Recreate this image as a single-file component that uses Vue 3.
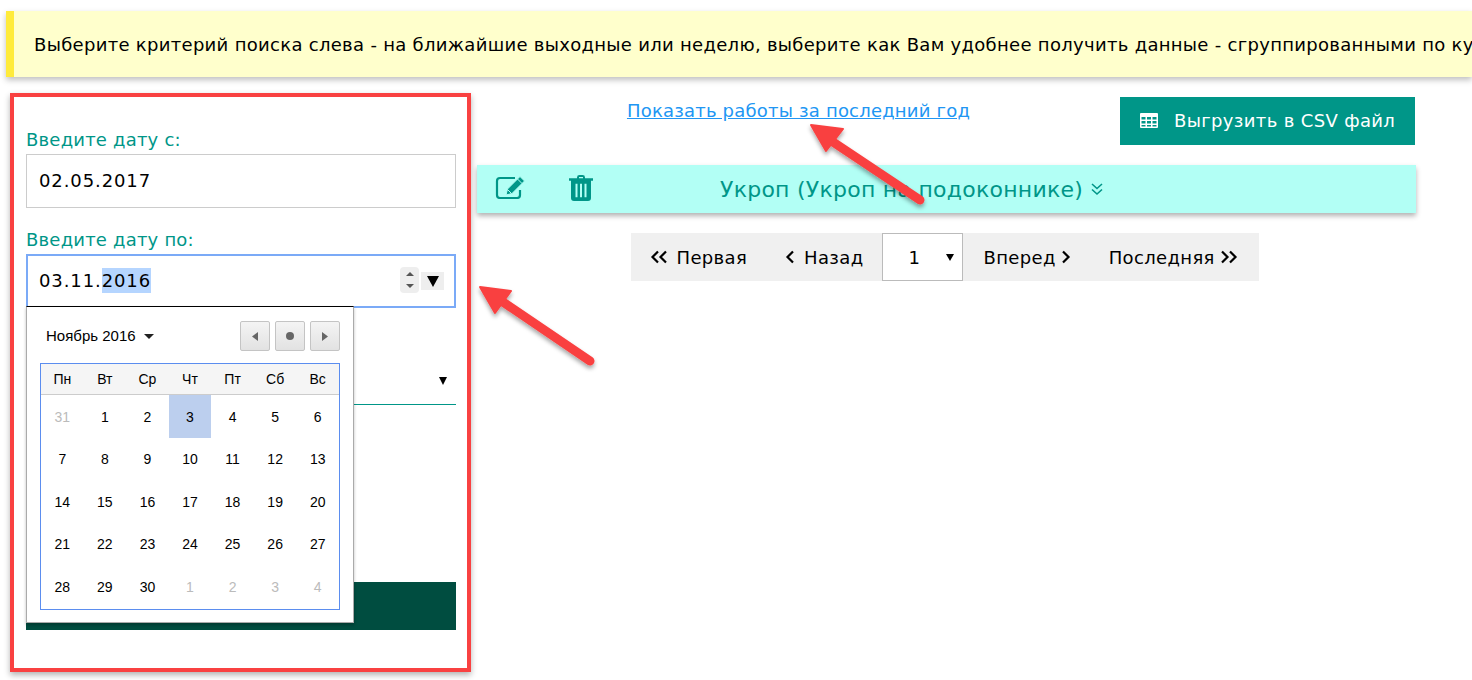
<script setup>
const weekDays = ['Пн', 'Вт', 'Ср', 'Чт', 'Пт', 'Сб', 'Вс'];

const days = [
  { n: 31, muted: true }, ...range(1, 30),
  { n: 1, muted: true }, { n: 2, muted: true }, { n: 3, muted: true }, { n: 4, muted: true },
];

function range(from, to) {
  const out = [];
  for (let i = from; i <= to; i++) out.push({ n: i, selected: i === 3 });
  return out;
}
</script>

<template>
  <div class="page">
    <div class="alert">
      Выберите критерий поиска слева - на ближайшие выходные или неделю, выберите как Вам удобнее получить данные - сгруппированными по ку
    </div>

    <div class="content">
      <aside class="panel">
        <label class="label">Введите дату с:</label>
        <div class="input">02.05.2017</div>

        <label class="label second">Введите дату по:</label>
        <div class="input focused">
          03.11.<span class="sel">2016</span>
          <span class="spin">
            <svg width="14" height="24" viewBox="0 0 14 24"><path d="M7 4l4 4H3zM7 20l-4-4h8z" fill="#555" /></svg>
          </span>
          <span class="drop"><svg width="14" height="12" viewBox="0 0 14 12"><path d="M1 1h12L7 12z" fill="#000" /></svg></span>
        </div>

        <div class="select-line">
          <span class="select-arrow"></span>
        </div>

        <button class="dark-btn"></button>

        <div class="calendar">
          <div class="cal-head">
            <span class="month">Ноябрь 2016 <i class="caret"></i></span>
            <div class="nav">
              <span class="nav-btn"><svg width="6" height="9" viewBox="0 0 6 9"><path d="M6 0v9L0 4.500z" fill="#666" /></svg></span>
              <span class="nav-btn"><i class="dot"></i></span>
              <span class="nav-btn"><svg width="6" height="9" viewBox="0 0 6 9"><path d="M0 0v9l6-4.500z" fill="#666" /></svg></span>
            </div>
          </div>
          <div class="cal-table">
            <div class="week-row">
              <span v-for="d in weekDays" :key="d">{{ d }}</span>
            </div>
            <div class="day-grid">
              <span
                v-for="(d, i) in days"
                :key="i"
                class="day"
                :class="{ muted: d.muted, selected: d.selected }"
              >{{ d.n }}</span>
            </div>
          </div>
        </div>
      </aside>

      <main class="main">
        <div class="top-row">
          <div class="link-cell"><a class="link" href="#">Показать работы за последний год</a></div>
          <button class="csv-btn">
            <svg width="18" height="15" viewBox="0 0 18 15"><path fill="#fff" fill-rule="evenodd" d="M1 0h16a1 1 0 0 1 1 1v13a1 1 0 0 1-1 1H1a1 1 0 0 1-1-1V1a1 1 0 0 1 1-1zm.5 4v2.500h4V4zm5.500 0v2.500h4V4zm5.500 0v2.500h4V4zM1.500 8v2.500h4V8zM7 8v2.500h4V8zm5.500 0v2.500h4V8zM1.500 12v1.500h4V12zM7 12v1.500h4V12zm5.500 0v1.500h4V12z" /></svg>
            Выгрузить в CSV файл
          </button>
        </div>

        <div class="crop-bar">
          <svg class="edit" width="32" height="24" viewBox="0 0 32 24">
            <path d="M25 15v5a3 3 0 0 1-3 3H5a3 3 0 0 1-3-3V6a3 3 0 0 1 3-3h15" fill="none" stroke="#009688" stroke-width="2.200" />
            <path d="M11 20l1.500-6L25 1.500l4.500 4.500L17 18.500z" fill="#009688" stroke="#b2fff5" stroke-width="1" />
            <path d="M22.500 4l4.500 4.500M13 15l3 3" stroke="#b2fff5" stroke-width="1" />
          </svg>
          <svg class="trash" width="24" height="26" viewBox="0 0 24 27" preserveAspectRatio="none">
            <path fill="#009688" fill-rule="evenodd" d="M8 3.500V2.500A2.500 2.500 0 0 1 10.500 0h3A2.500 2.500 0 0 1 16 2.500v1h8V6h-2v18a3 3 0 0 1-3 3H5a3 3 0 0 1-3-3V6H0V3.500zM10 3.500h4V2h-4zM6.500 9v14h2V9zM11 9v14h2V9zM15.500 9v14h2V9z" />
          </svg>
          <span class="crop-title">Укроп (Укроп на подоконнике)</span>
          <svg class="chev-down" width="14" height="14" viewBox="0 0 14 14"><path d="M2 2l5 4.500L12 2M2 7.500l5 4.500 5-4.500" fill="none" stroke="#009688" stroke-width="1.600" /></svg>
        </div>

        <div class="pager-wrap">
          <div class="pager">
            <span class="pg first">
              <svg width="18" height="14" viewBox="0 0 18 14"><path d="M8 1.500L2.500 7 8 12.500M16 1.500L10.500 7l5.500 5.500" fill="none" stroke="#000" stroke-width="2.200" /></svg>
              Первая
            </span>
            <span class="pg back">
              <svg width="10" height="14" viewBox="0 0 10 14"><path d="M8 1.500L2.500 7 8 12.500" fill="none" stroke="#000" stroke-width="2.200" /></svg>
              Назад
            </span>
            <span class="page-select">1<i class="select-arrow small"></i></span>
            <span class="pg next">
              Вперед
              <svg width="10" height="14" viewBox="0 0 10 14"><path d="M2 1.500L7.500 7 2 12.500" fill="none" stroke="#000" stroke-width="2.200" /></svg>
            </span>
            <span class="pg last">
              Последняя
              <svg width="18" height="14" viewBox="0 0 18 14"><path d="M2 1.500L7.500 7 2 12.500M10 1.500L15.500 7 10 12.500" fill="none" stroke="#000" stroke-width="2.200" /></svg>
            </span>
          </div>
        </div>
      </main>
    </div>

    <!-- red annotation arrows drawn over the page -->
    <svg class="arrows" width="1472" height="680" viewBox="0 0 1472 680">
      <defs>
        <filter id="sh" x="-20%" y="-20%" width="140%" height="140%">
          <feDropShadow dx="0" dy="3" stdDeviation="2" flood-color="#000" flood-opacity="0.35" />
        </filter>
      </defs>
      <g fill="#f94141" stroke="#f94141" stroke-linejoin="round" filter="url(#sh)">
        <path d="M480 287L511 291 495 313z" stroke-width="2" />
        <path d="M500 300L590 361" stroke-width="9" stroke-linecap="round" />
        <path d="M811 125L843 129 826 151z" stroke-width="2" />
        <path d="M830 140L920 200" stroke-width="9" stroke-linecap="round" />
      </g>
    </svg>
  </div>
</template>

<style scoped>
.page {
  position: relative;
  width: 1472px;
  height: 680px;
  overflow: hidden;
  background: #fff;
  font-family: "DejaVu Sans", Verdana, sans-serif;
  color: #000;
}

.alert {
  box-sizing: border-box;
  margin: 11px 0 0 6px;
  height: 66px;
  padding-left: 20px;
  line-height: 68px;
  font-size: 18px;
  letter-spacing: 0.3px;
  white-space: nowrap;
  overflow: hidden;
  background: #ffffcc;
  border-left: 8px solid #ffeb3b;
  box-shadow: 0 3px 6px rgba(0, 0, 0, 0.25);
}

.content {
  display: flex;
  margin-top: 16px;
  padding-left: 10px;
}

.panel {
  position: relative;
  box-sizing: border-box;
  width: 461px;
  height: 579px;
  padding: 31px 11px 0 12px;
  border: 4px solid #f94141;
  box-shadow: 0 3px 6px rgba(0, 0, 0, 0.3);
  flex-shrink: 0;
}

.label {
  display: block;
  height: 26px;
  line-height: 24px;
  font-size: 18px;
  letter-spacing: 0.2px;
  color: #009688;
}

.label.second {
  margin-top: 20px;
}

.input {
  position: relative;
  box-sizing: border-box;
  height: 54px;
  padding-left: 12px;
  line-height: 52px;
  font-size: 18px;
  letter-spacing: 0.9px;
  border: 1px solid #ccc;
}

.input.focused {
  border: 1px solid #7baaf7;
  box-shadow: 0 0 0 1px #7baaf7 inset;
}

.sel {
  background: #b5d5ff;
  padding: 2px 0;
}

.spin {
  position: absolute;
  right: 36px;
  top: 12px;
  width: 19px;
  height: 26px;
  display: flex;
  align-items: center;
  justify-content: center;
  background: #eee;
  border-radius: 4px;
}

.drop {
  position: absolute;
  right: 11px;
  top: 17px;
  width: 23px;
  height: 18px;
  display: flex;
  align-items: center;
  justify-content: center;
  background: #eee;
}

.select-line {
  position: relative;
  height: 96px;
  border-bottom: 1px solid #009688;
}

.select-arrow {
  position: absolute;
  right: 9px;
  top: 69px;
  border-left: 4px solid transparent;
  border-right: 4px solid transparent;
  border-top: 8px solid #000;
}

.dark-btn {
  display: block;
  width: 100%;
  height: 48px;
  margin-top: 177px;
  border: 0;
  background: #004d40;
}

.calendar {
  position: absolute;
  left: 12px;
  top: 209px;
  box-sizing: border-box;
  width: 328px;
  height: 317px;
  padding: 14px 13px 0;
  background: #fff;
  border: 1px solid #aaa;
  border-top-color: #000;
  box-shadow: 0 2px 3px rgba(0, 0, 0, 0.25);
  font-family: "Liberation Sans", Arial, sans-serif;
  font-size: 14px;
}

.cal-head {
  display: flex;
  align-items: center;
  justify-content: space-between;
  height: 30px;
  padding: 0 0 0 6px;
}

.month {
  padding-bottom: 2px;
  font-size: 15px;
}

.caret {
  display: inline-block;
  margin-left: 4px;
  vertical-align: 2px;
  border-left: 5px solid transparent;
  border-right: 5px solid transparent;
  border-top: 5px solid #222;
}

.nav {
  display: flex;
  gap: 5px;
}

.nav-btn {
  box-sizing: border-box;
  width: 30px;
  height: 30px;
  display: flex;
  align-items: center;
  justify-content: center;
  background: linear-gradient(#f4f4f4, #e2e2e2);
  border: 1px solid #c4c4c4;
  border-radius: 2px;
}

.dot {
  width: 8px;
  height: 8px;
  border-radius: 50%;
  background: #666;
}

.cal-table {
  box-sizing: border-box;
  margin-top: 12px;
  height: 247px;
  border: 1px solid #5b8def;
}

.week-row {
  display: grid;
  grid-template-columns: repeat(7, 1fr);
  height: 31px;
  line-height: 30px;
  text-align: center;
  background: #f5f5f5;
  border-bottom: 1px solid #ccc;
  box-sizing: border-box;
}

.day-grid {
  display: grid;
  grid-template-columns: repeat(7, 1fr);
  grid-auto-rows: 42.500px;
}

.day {
  display: flex;
  align-items: center;
  justify-content: center;
  padding-top: 1px;
  box-sizing: border-box;
}

.muted {
  color: #bbb;
}

.selected {
  background: #bccfee;
}

.main {
  box-sizing: border-box;
  width: 939px;
  margin-left: 6px;
  padding-top: 4px;
}

.top-row {
  display: grid;
  grid-template-columns: 643px 295px;
  height: 48px;
}

.link-cell {
  text-align: center;
  line-height: 28px;
}

.link {
  color: #2196f3;
  font-size: 18px;
  letter-spacing: 0.2px;
}

.csv-btn {
  display: flex;
  align-items: center;
  gap: 16px;
  padding: 0 0 2px 20px;
  border: 0;
  background: #009688;
  color: #fff;
  font-family: inherit;
  font-size: 18px;
  letter-spacing: 0.35px;
}

.crop-bar {
  display: flex;
  align-items: center;
  height: 48px;
  margin-top: 20px;
  padding-left: 18px;
  background: #b2fff5;
  box-shadow: 0 3px 5px rgba(0, 0, 0, 0.3);
  color: #009688;
}

.edit {
  margin-top: -4px;
}

.trash {
  margin: -2px 0 0 42px;
}

.crop-title {
  margin-left: 127px;
  font-size: 22px;
  letter-spacing: 0.25px;
}

.chev-down {
  margin-left: 7px;
}

.pager-wrap {
  display: flex;
  justify-content: center;
  margin-top: 20px;
  padding-right: 4px;
}

.pager {
  display: flex;
  align-items: center;
  box-sizing: border-box;
  width: 628px;
  height: 48px;
  background: #f0f0f0;
  font-size: 18px;
  letter-spacing: 0.35px;
}

.pg {
  display: flex;
  align-items: center;
  gap: 9px;
}

.first {
  margin-left: 19px;
}

.back {
  margin-left: 38px;
}

.page-select {
  position: relative;
  box-sizing: border-box;
  width: 81px;
  height: 48px;
  margin-left: 19px;
  padding-left: 25px;
  line-height: 48px;
  background: #fff;
  border: 1px solid #bbb;
}

.select-arrow.small {
  top: 20px;
  right: 8px;
  border-top-width: 7px;
}

.next {
  margin-left: 20px;
  gap: 5px;
}

.last {
  margin-left: 38px;
  gap: 5px;
}

.arrows {
  position: absolute;
  left: 0;
  top: 0;
  pointer-events: none;
}
</style>

<style>
body {
  margin: 0;
}
</style>
